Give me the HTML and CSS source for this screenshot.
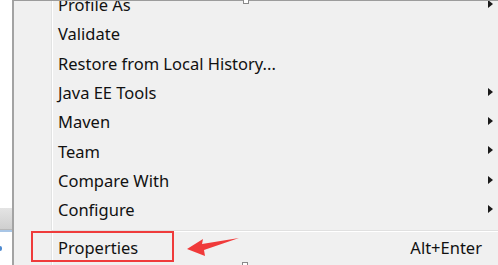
FILE: index.html
```html
<!DOCTYPE html>
<html lang="en">
<head>
    <meta charset="UTF-8">
    <title>Context menu</title>
    <link rel="stylesheet" href="styles.css">
</head>
<body>
    <div class="screen">
        <div class="side">
            <div class="side-fill"></div>
            <div class="side-tab"></div>
            <div class="side-line"></div>
            <div class="side-rest"><span class="dot"></span></div>
        </div>
        <div class="menu">
            <div class="gutter"></div>
            <div class="items">
                <div class="item sub"><span class="label">Profile As</span></div>
                <div class="item"><span class="label">Validate</span></div>
                <div class="item"><span class="label">Restore from Local History...</span></div>
                <div class="item sub"><span class="label">Java EE Tools</span></div>
                <div class="item sub"><span class="label">Maven</span></div>
                <div class="item sub"><span class="label">Team</span></div>
                <div class="item sub"><span class="label">Compare With</span></div>
                <div class="item sub"><span class="label">Configure</span></div>
                <div class="sep"></div>
                <div class="item"><span class="label">Properties</span><span class="key">Alt+Enter</span></div>
            </div>
        </div>
    </div>

    <div class="handle handle-top"></div>
    <div class="handle handle-bottom"></div>
    <div class="mark"></div>
    <svg class="pointer" width="60" height="24" viewBox="0 0 60 24">
        <polygon points="1,13 17,3 16,8 53,2 18,14 19,20" fill="#f03a3a"/>
    </svg>
</body>
</html>
```

FILE: styles.css
```css
html, body {
    margin: 0;
    padding: 0;
    width: 498px;
    height: 265px;
    overflow: hidden;
    background: #ffffff;
    font-family: "Noto Sans", "Open Sans", sans-serif;
}
.screen {
    display: flex;
    height: 265px;
}
.side {
    width: 12px;
    display: flex;
    flex-direction: column;
}
.side-fill {
    height: 208px;
    background: #ffffff;
}
.side-tab {
    height: 21px;
    background: linear-gradient(to bottom, #e4e4e4, #cfcfcf);
    border-bottom: 1px solid #b8b8b8;
}
.side-line {
    height: 2px;
    background: #a9c6e6;
}
.side-rest {
    flex: 1;
    background: #ffffff;
    position: relative;
}
.dot {
    position: absolute;
    left: -2px;
    top: 14px;
    width: 4px;
    height: 5px;
    border-radius: 2px;
    background: #4d8ad0;
}
.menu {
    flex: 1;
    display: flex;
    background: #f0f0f0;
    border-left: 2px solid #a3a3a3;
    border-top: 1px solid #9c9c9c;
    overflow: hidden;
}
.gutter {
    width: 37px;
    border-right: 1px solid #e2e3e3;
    box-shadow: 1px 0 0 #ffffff;
}
.items {
    flex: 1;
    margin-top: -11px;
    padding-left: 6px;
}
.item {
    height: 29.3px;
    line-height: 29px;
    font-size: 16.5px;
    color: #111111;
    display: flex;
    align-items: center;
    position: relative;
    padding-right: 16px;
}
.label {
    flex: 1;
}
.item.sub::after {
    content: "";
    position: absolute;
    right: 5px;
    top: 10px;
    border-top: 4px solid transparent;
    border-bottom: 4px solid transparent;
    border-left: 5px solid #1a1a1a;
}
.sep {
    height: 1px;
    margin: 6px 0 0 -6px;
    background: #e0e0e0;
    border-bottom: 1px solid #ffffff;
}
.handle {
    position: absolute;
    width: 4px;
    height: 4px;
    background: #ffffff;
    border: 1px solid #8a8a8a;
}
.handle-top {
    left: 243px;
    top: -2px;
}
.handle-bottom {
    left: 242px;
    top: 262px;
}
.mark {
    position: absolute;
    left: 31px;
    top: 231px;
    width: 139px;
    height: 27px;
    border: 2px solid #ef3b3b;
}
.pointer {
    position: absolute;
    left: 186px;
    top: 236px;
}
```
